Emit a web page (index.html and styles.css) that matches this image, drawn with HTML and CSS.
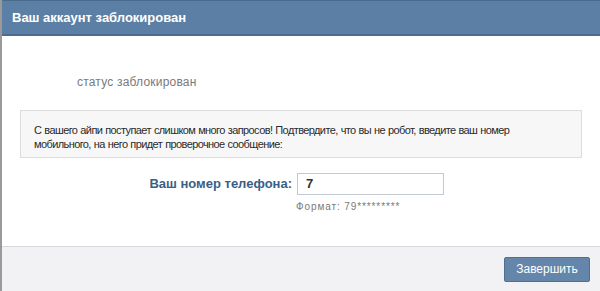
FILE: index.html
```html
<!DOCTYPE html>
<html lang="ru">
<head>
<meta charset="utf-8">
<link rel="stylesheet" href="styles.css">
</head>
<body>
<div class="box">
  <div class="header"><span class="title">Ваш аккаунт заблокирован</span></div>
  <div class="content">
    <div class="status">статус заблокирован</div>
    <div class="info">С вашего айпи поступает слишком много запросов! Подтвердите, что вы не робот, введите ваш номер мобильного, на него придет проверочное сообщение:</div>
    <div class="phone-row">
      <label class="label">Ваш номер телефона:</label>
      <div class="field">
        <div class="input">7</div>
        <div class="hint">Формат: 79*********</div>
      </div>
    </div>
  </div>
  <div class="footer">
    <button class="btn">Завершить</button>
  </div>
</div>
</body>
</html>
```
FILE: styles.css
```css
html, body {
  margin: 0;
  padding: 0;
  background: #ffffff;
}
body {
  width: 600px;
  height: 291px;
  overflow: hidden;
  font-family: "Liberation Sans", Arial, sans-serif;
}
.box {
  height: 291px;
  display: flex;
  flex-direction: column;
  border-left: 2px solid #9a9a9a;
  box-sizing: border-box;
}
.header {
  height: 33px;
  background: #5b7fa5;
  border-top: 1px solid #4a6a8e;
  border-bottom: 2px solid #4b6b8f;
  display: flex;
  align-items: center;
  padding-left: 10px;
}
.title {
  color: #ffffff;
  font-weight: bold;
  font-size: 13px;
}
.content {
  flex: 1;
  display: flex;
  flex-direction: column;
}
.status {
  margin: 39px 0 0 75px;
  font-size: 12px;
  line-height: 14px;
  color: #7a7a7a;
  letter-spacing: 0.2px;
}
.info {
  margin: 21px 18px 0 18px;
  height: 48px;
  box-sizing: border-box;
  padding: 12px 12px 0 13px;
  background: #f7f7f8;
  border: 1px solid #dcdcdc;
  font-size: 11px;
  line-height: 14px;
  letter-spacing: -0.6px;
  word-spacing: 0.5px;
  color: #2a2a2a;
}
.phone-row {
  display: flex;
  margin-top: 15px;
}
.label {
  width: 295px;
  text-align: right;
  font-size: 13px;
  font-weight: bold;
  color: #395f86;
  line-height: 22px;
  padding-right: 5px;
  box-sizing: border-box;
}
.field {
  display: flex;
  flex-direction: column;
}
.input {
  width: 147px;
  height: 22px;
  box-sizing: border-box;
  border: 1px solid #c3cad2;
  padding-left: 8px;
  font-size: 13px;
  font-weight: bold;
  line-height: 20px;
  color: #333;
}
.hint {
  margin-top: 6px;
  margin-left: -1px;
  font-size: 10px;
  line-height: 12px;
  color: #7a7a7a;
  letter-spacing: 0.9px;
}
.footer {
  height: 45px;
  box-sizing: border-box;
  border-top: 1px solid #d8d8d8;
  background: #f2f2f4;
  display: flex;
  justify-content: flex-end;
  align-items: center;
  padding-right: 10px;
}
.btn {
  width: 86px;
  height: 25px;
  border: 1px solid #4f6f93;
  border-radius: 2px;
  background: #6586ab;
  color: #ffffff;
  font-family: "Liberation Sans", Arial, sans-serif;
  font-size: 12px;
  padding: 0;
}
```
